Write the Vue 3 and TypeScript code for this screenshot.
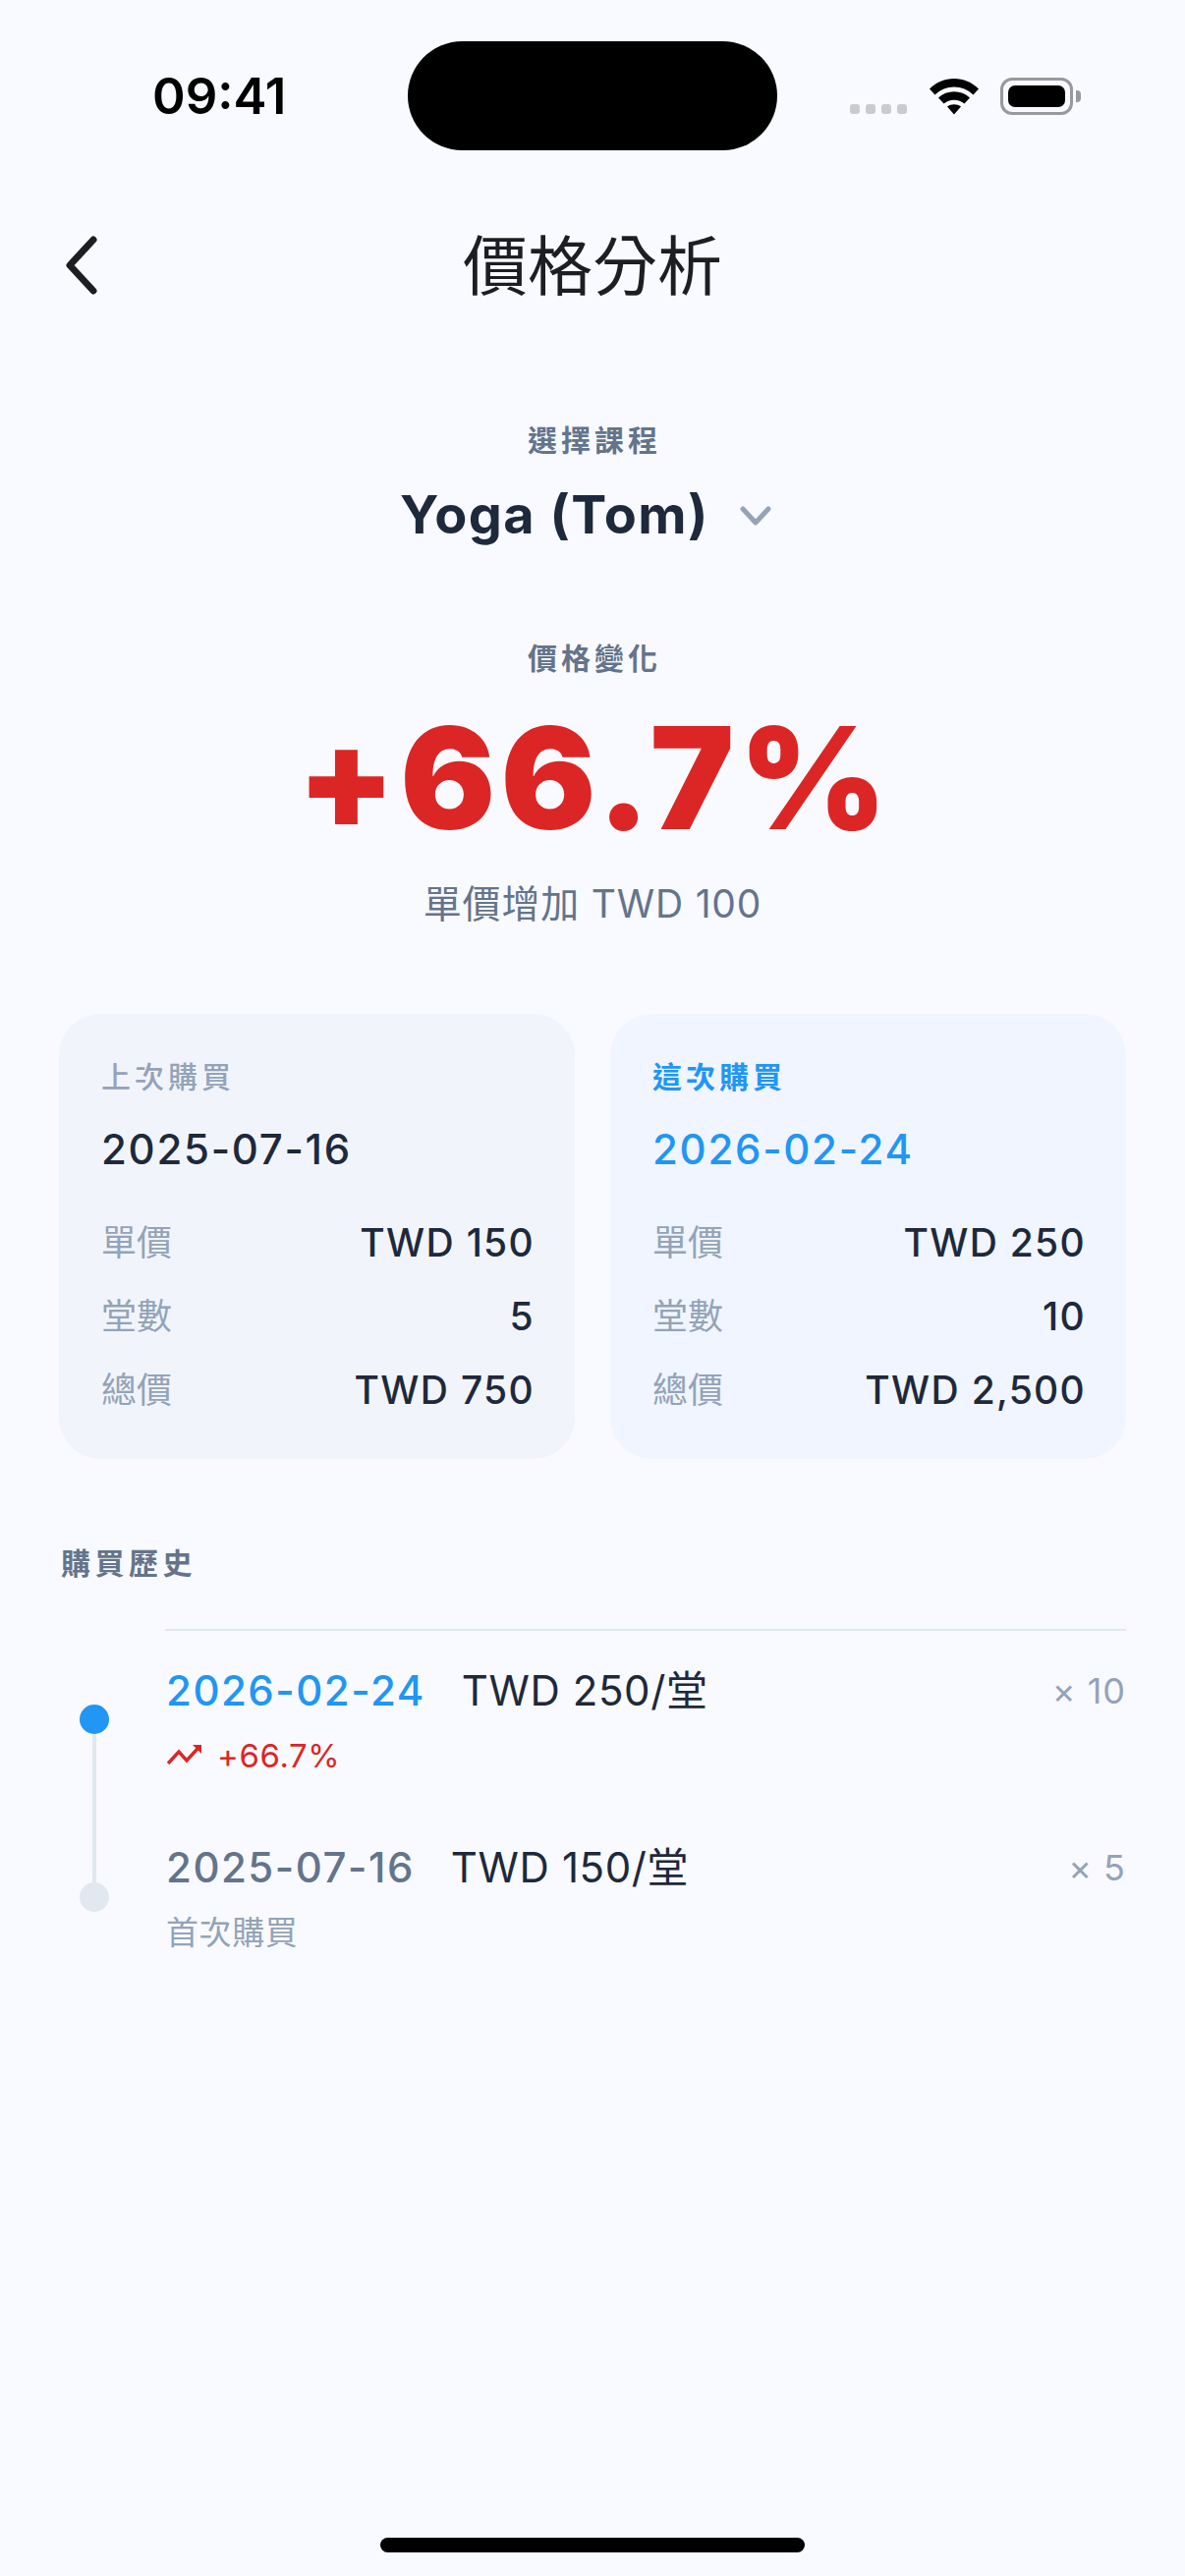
<template>
  <div class="page">
    <div class="status">
      <span class="time">09:41</span>
      <div class="island"></div>
      <div class="status-icons">
        <div class="signal"><i v-for="n in 4" :key="n"></i></div>
        <svg class="wifi" width="52" height="38" viewBox="0 0 52 38">
          <path d="M1 11.500C8 4.500 16.500 1 26 1s18 3.500 25 10.500l-5.500 6C40 12.300 33.500 9.500 26 9.500S12 12.300 6.500 17.500z" fill="#000" />
          <path d="M10 20.500C14.500 16.500 20 14.300 26 14.300s11.500 2.200 16 6.200l-5.500 6C33.500 24 30 22.700 26 22.700s-7.500 1.300-10.500 3.800z" fill="#000" />
          <path d="M19 29.500c2-1.500 4.500-2.300 7-2.300s5 .8 7 2.300l-7 8z" fill="#000" />
        </svg>
        <div class="battery">
          <div class="battery-body"><div class="battery-fill"></div></div>
          <div class="battery-cap"></div>
        </div>
      </div>
    </div>

    <header class="header">
      <svg class="back" width="36" height="60" viewBox="0 0 36 60">
        <path d="M30 4 6 30l24 26" fill="none" stroke="#1c1e24" stroke-width="7" stroke-linecap="round" stroke-linejoin="round" />
      </svg>
      <h1 class="title">價格分析</h1>
    </header>

    <div class="label first">選擇課程</div>
    <div class="course">
      <span>Yoga (Tom)</span>
      <svg class="caret" width="32" height="22" viewBox="0 0 32 22">
        <path d="M3 3l13 14L29 3" fill="none" stroke="#94a3b8" stroke-width="5" stroke-linecap="round" stroke-linejoin="round" />
      </svg>
    </div>

    <div class="label second">價格變化</div>
    <div class="percent">+66.7%</div>
    <div class="delta">單價增加 TWD 100</div>

    <div class="cards">
      <section v-for="c in cards" :key="c.title" class="card" :class="{ current: c.current }">
        <div class="card-title">{{ c.title }}</div>
        <div class="card-date">{{ c.date }}</div>
        <div class="card-rows">
          <div v-for="r in c.rows" :key="r.name" class="card-row">
            <span class="row-name">{{ r.name }}</span>
            <span class="row-value">{{ r.value }}</span>
          </div>
        </div>
      </section>
    </div>

    <div class="history-title">購買歷史</div>
    <div class="timeline">
      <div class="rail">
        <span class="dot active"></span>
        <span class="line"></span>
        <span class="dot"></span>
      </div>
      <div class="entries">
        <div v-for="e in history" :key="e.date" class="entry">
          <div class="entry-main">
            <span class="entry-date" :class="{ active: e.active }">{{ e.date }}</span>
            <span class="entry-price">{{ e.price }}</span>
            <span class="entry-count">× {{ e.count }}</span>
          </div>
          <div v-if="e.active" class="entry-sub up">
            <svg width="36" height="22" viewBox="0 0 36 22">
              <path d="M1 19 12 7l8 9L31 4" fill="none" stroke="#dc2626" stroke-width="3.500" />
              <path d="M26 0h9v9z" fill="#dc2626" />
            </svg>
            <span>{{ e.note }}</span>
          </div>
          <div v-else class="entry-sub">{{ e.note }}</div>
        </div>
      </div>
    </div>

    <div class="home"></div>
  </div>
</template>

<script setup lang="ts">
interface Row { name: string; value: string }
interface Card { title: string; date: string; current: boolean; rows: Row[] }
interface Entry { date: string; price: string; count: number; note: string; active: boolean }

const cards: Card[] = [
  {
    title: '上次購買',
    date: '2025-07-16',
    current: false,
    rows: [
      { name: '單價', value: 'TWD 150' },
      { name: '堂數', value: '5' },
      { name: '總價', value: 'TWD 750' },
    ],
  },
  {
    title: '這次購買',
    date: '2026-02-24',
    current: true,
    rows: [
      { name: '單價', value: 'TWD 250' },
      { name: '堂數', value: '10' },
      { name: '總價', value: 'TWD 2,500' },
    ],
  },
]

const history: Entry[] = [
  { date: '2026-02-24', price: 'TWD 250/堂', count: 10, note: '+66.7%', active: true },
  { date: '2025-07-16', price: 'TWD 150/堂', count: 5, note: '首次購買', active: false },
]
</script>

<style>
html, body { margin: 0; background: #f8faff; }
</style>

<style scoped>
.page {
  width: 1206px;
  height: 2622px;
  overflow: hidden;
  display: flex;
  flex-direction: column;
  background: #f8faff;
  color: #1e293b;
  font-family: Inter, "Noto Sans CJK TC", sans-serif;
}

.status { height: 111px; margin-top: 42px; padding: 0 106px 0 155px; display: flex; align-items: center; }
.time { width: 135px; font-size: 51px; font-weight: 600; line-height: 60px; color: #000; }
.island { width: 376px; height: 111px; margin-left: 125px; border-radius: 56px; background: #000; }
.status-icons { height: 38px; margin-left: auto; display: flex; align-items: flex-end; }
.signal { display: flex; gap: 6px; margin-bottom: 1px; }
.signal i { width: 10px; height: 10px; border-radius: 3px; background: #c9cbd0; }
.wifi { margin-left: 22px; }
.battery { display: flex; align-items: center; height: 38px; margin-left: 21px; }
.battery-body { box-sizing: border-box; width: 74px; height: 38px; padding: 5px; border: 3px solid #98989e; border-radius: 12px; }
.battery-fill { width: 100%; height: 100%; border-radius: 7px; background: #000; }
.battery-cap { width: 5px; height: 12px; margin-left: 3px; border-radius: 0 4px 4px 0; background: #98989e; }

.header { position: relative; height: 90px; margin-top: 72px; display: flex; align-items: center; justify-content: center; }
.back { position: absolute; left: 65px; top: 15px; }
.title { margin: 2px 0 0; font-size: 66px; font-weight: 400; line-height: 90px; color: #1c1e24; }

.label { height: 40px; padding-left: 4px; line-height: 40px; text-align: center; font-size: 30px; font-weight: 600; letter-spacing: 4px; color: #64748b; }
.label.first { margin-top: 113px; }
.label.second { margin-top: 91px; }

.course { height: 70px; margin-top: 21px; padding-right: 14px; display: flex; align-items: center; justify-content: center; gap: 31px; font-size: 54px; font-weight: 700; line-height: 70px; letter-spacing: 1.500px; }
.caret { margin-top: 3px; }

.percent { height: 150px; margin-top: 27px; padding-left: 4px; text-align: center; font-size: 144px; font-weight: 900; line-height: 150px; letter-spacing: 5px; color: #dc2626; }
.delta { height: 50px; margin-top: 28px; text-align: center; font-size: 39px; line-height: 50px; letter-spacing: 0.800px; color: #64748b; }

.cards { display: flex; gap: 36px; margin: 87px 60px 0; }
.card { flex: 1; padding: 44px 41px 45px 43px; border-radius: 42px; background: #f1f5fb; }
.card.current { background: #f0f5ff; }
.card-title { height: 40px; line-height: 40px; font-size: 30px; font-weight: 500; letter-spacing: 4px; color: #94a3b8; }
.card.current .card-title { color: #2196f3; font-weight: 600; }
.card-date { height: 50px; margin-top: 29px; font-size: 42px; font-weight: 500; line-height: 50px; letter-spacing: 1.700px; }
.card.current .card-date { color: #2196f3; }
.card-rows { margin-top: 45px; display: flex; flex-direction: column; gap: 25px; }
.card-row { height: 50px; display: flex; justify-content: space-between; line-height: 50px; }
.row-name { font-size: 36px; color: #94a3b8; }
.row-value { font-size: 39px; font-weight: 500; letter-spacing: 1.300px; }

.history-title { height: 40px; margin: 86px 60px 0 62px; line-height: 40px; font-size: 30px; font-weight: 600; letter-spacing: 4.500px; color: #64748b; }

.timeline { display: flex; margin: 47px 60px 0 81px; }
.rail { width: 30px; margin-right: 57px; padding-top: 77px; display: flex; flex-direction: column; align-items: center; }
.dot { flex: none; width: 30px; height: 30px; border-radius: 50%; background: #e2e8f0; }
.dot.active { background: #2196f3; }
.line { width: 4px; height: 151px; background: #e2e8f0; }

.entries { flex: 1; padding-top: 36px; border-top: 2px solid #e2e8f0; display: flex; flex-direction: column; gap: 64px; }
.entry-main { height: 50px; display: flex; line-height: 50px; padding-left: 1px; }
.entry-date { font-size: 42px; font-weight: 500; letter-spacing: 1.500px; color: #64748b; }
.entry-date.active { color: #2196f3; }
.entry-price { margin-left: 37px; font-size: 42px; letter-spacing: 0.600px; }
.entry-count { margin-left: auto; font-size: 36px; letter-spacing: 1px; color: #94a3b8; }
.entry-sub { height: 50px; margin-top: 16px; padding-left: 1px; line-height: 50px; font-size: 33px; letter-spacing: 0.600px; color: #94a3b8; }
.entry-sub.up { padding-left: 2px; gap: 15px; display: flex; align-items: center; color: #dc2626; }

.home { width: 432px; height: 15px; margin: auto auto 24px; border-radius: 8px; background: #000; }
</style>
